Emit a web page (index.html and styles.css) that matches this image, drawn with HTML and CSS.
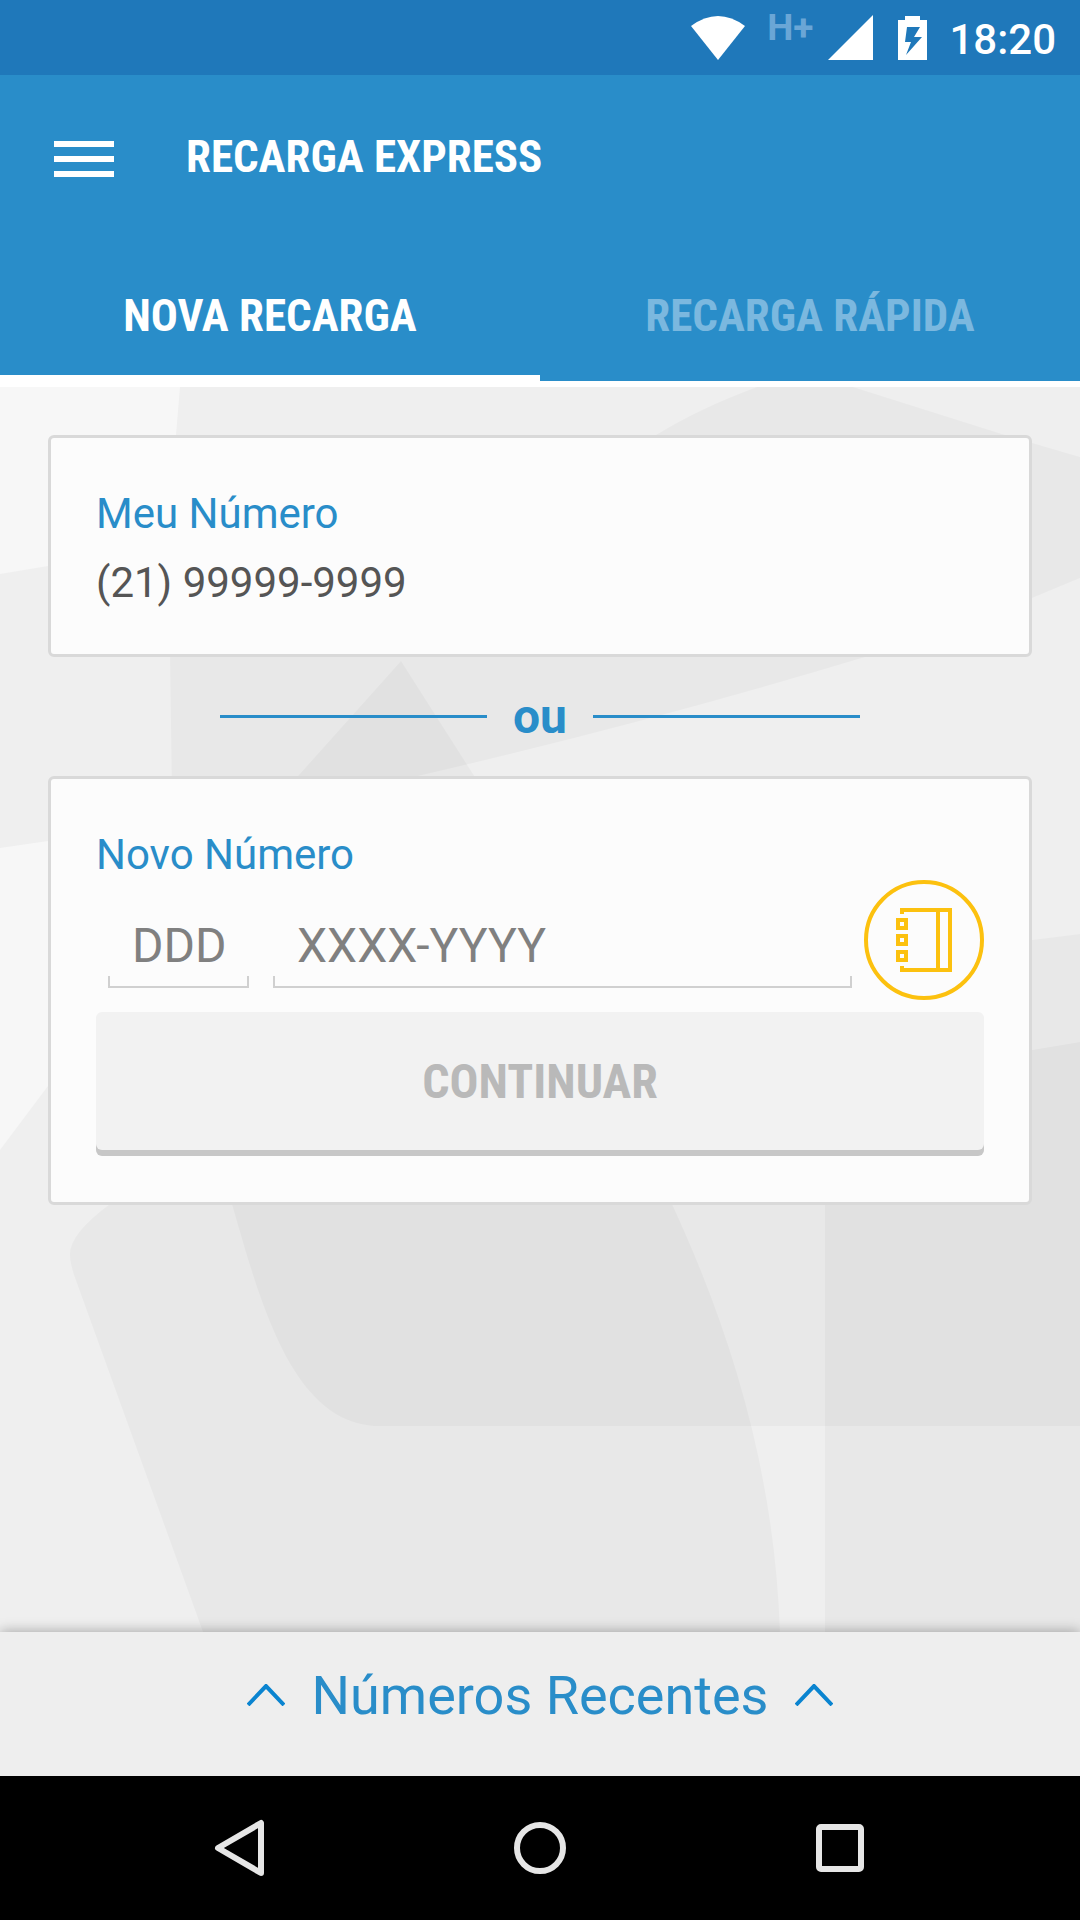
FILE: index.html
```html
<!DOCTYPE html>
<html lang="pt-BR">
<head>
    <meta charset="UTF-8">
    <meta name="viewport" content="width=device-width, initial-scale=1.0">
    <title>Recarga Express</title>
    <link rel="stylesheet" href="styles.css">
</head>
<body>
    <div class="status-bar">
        <svg class="wifi" width="54" height="44" viewBox="0 0 54 44"><path d="M0 10Q27 -10 54 10L27 44Z" fill="#fff"/></svg>
        <span class="network">H+</span>
        <svg class="signal" width="45" height="45" viewBox="0 0 45 45"><path d="M45 0V45H0Z" fill="#fff"/></svg>
        <svg class="battery" width="29" height="44" viewBox="0 0 29 44"><path fill="#fff" fill-rule="evenodd" d="M7 0H22V4H29V44H0V4H7ZM9 11L7 26H13L8 39L24 21H16L22 11Z"/></svg>
        <span class="clock">18:20</span>
    </div>

    <header>
        <div class="app-bar">
            <button class="menu" aria-label="Menu">
                <svg width="60" height="36" viewBox="0 0 60 36"><path d="M0 3H60M0 18H60M0 33H60" stroke="#fff" stroke-width="6"/></svg>
            </button>
            <h1>RECARGA EXPRESS</h1>
        </div>
        <nav class="tabs">
            <a class="tab active" href="#nova">NOVA RECARGA</a>
            <a class="tab" href="#rapida">RECARGA RÁPIDA</a>
        </nav>
    </header>

    <main>
        <svg class="backdrop" viewBox="0 387 1080 1245" preserveAspectRatio="none" aria-hidden="true">
            <g fill="#f7f7f7">
                <path d="M0 387H180L176 435L160 540L48 566L0 574Z"/>
                <path d="M0 848L48 841L200 820V890L48 1086L0 1150Z"/>
            </g>
            <g fill="#000" fill-opacity=".027">
                <path d="M165 540L170 656L172 800H320L418 776Q650 722 865 657L1032 598L1080 578V457L1005 435L853 387Q800 375 757 387Q700 408 656 435L400 600Z"/>
                <path d="M401 661L290 785H480Z"/>
                <path d="M900 960L1032 940L1080 934V1632H825V1000Z"/>
                <path d="M110 1204Q68 1235 70 1256Q70 1262 74 1275L203 1632H780C775 1480 735 1340 672 1204L600 1040H300Z"/>
                <path d="M232 1204C262 1310 295 1426 380 1426H1080V1042L1032 1050L600 1120H200Z"/>
            </g>
        </svg>

        <section class="card">
            <h2>Meu Número</h2>
            <p class="phone">(21) 99999-9999</p>
        </section>

        <div class="divider">ou</div>

        <form class="card">
            <label for="numero">Novo Número</label>
            <div class="fields">
                <input class="ddd" type="tel" placeholder="DDD" aria-label="DDD">
                <input class="numero" id="numero" type="tel" placeholder="XXXX-YYYY">
                <button class="contacts" type="button" aria-label="Contatos">
                    <svg width="120" height="120" viewBox="0 0 120 120" fill="none" stroke="#fcc10f" stroke-width="4">
                        <circle cx="60" cy="60" r="58"/>
                        <path d="M38 34V30H86V90H38V86M74 30V90M34 40H42V48H34ZM34 56H42V64H34ZM34 72H42V80H34Z"/>
                    </svg>
                </button>
            </div>
            <button class="continuar" type="submit" disabled>CONTINUAR</button>
        </form>
    </main>

    <button class="recentes">
        <svg width="38" height="22" viewBox="0 0 38 22"><path d="M1 21L19 2L37 21" fill="none" stroke="#0a84d0" stroke-width="4"/></svg>
        Números Recentes
        <svg width="38" height="22" viewBox="0 0 38 22"><path d="M1 21L19 2L37 21" fill="none" stroke="#0a84d0" stroke-width="4"/></svg>
    </button>

    <div class="nav-bar">
        <button aria-label="Voltar">
            <svg width="60" height="60" viewBox="0 0 60 60"><path d="M51 5V55L8 30Z"/></svg>
        </button>
        <button aria-label="Início">
            <svg width="60" height="60" viewBox="0 0 60 60"><circle cx="30" cy="30" r="23"/></svg>
        </button>
        <button aria-label="Aplicativos">
            <svg width="60" height="60" viewBox="0 0 60 60"><rect x="9" y="9" width="42" height="42" rx="2"/></svg>
        </button>
    </div>
</body>
</html>
```
FILE: styles.css
```css
* {
    box-sizing: border-box;
}
body {
    margin: 0;
    min-height: 100vh;
    display: flex;
    flex-direction: column;
    font-family: Roboto, sans-serif;
    background-color: #efefef;
}
h1, h2, p {
    margin: 0;
}
button {
    padding: 0;
    border: none;
    background: none;
    font-family: inherit;
}
svg {
    display: block;
}

/* status bar */
.status-bar {
    height: 75px;
    padding: 0 24px;
    display: flex;
    justify-content: flex-end;
    align-items: center;
    background-color: #1f78ba;
    color: #fff;
}
.network {
    margin: 0 15px 20px 22px;
    font-size: 37px;
    font-weight: 700;
    line-height: 42px;
    color: #6aa6d6;
}
.battery {
    margin: 0 22px 0 25px;
}
.clock {
    padding-top: 4px;
    font-size: 42px;
    font-weight: 500;
}

/* header */
header {
    background-color: #298dc9;
    border-bottom: 6px solid #fff;
}
.app-bar {
    height: 168px;
    padding: 0 54px;
    display: flex;
    align-items: center;
    gap: 72px;
}
h1, .tab, .continuar {
    font-family: "Roboto Condensed", "Liberation Sans Narrow", Roboto, sans-serif;
    font-weight: 700;
}
h1 {
    padding-bottom: 6px;
    font-size: 45px;
    color: #fff;
}
.tabs {
    display: flex;
}
.tab {
    flex: 1;
    height: 138px;
    padding-top: 6px;
    display: flex;
    align-items: center;
    justify-content: center;
    font-size: 45px;
    color: #7bb8df;
    text-decoration: none;
}
.tab.active {
    color: #fff;
    box-shadow: inset 0 -6px #fff;
}

/* content */
main {
    flex: 1;
    position: relative;
    padding: 48px;
}
.backdrop {
    position: absolute;
    top: 0;
    left: 0;
    width: 100%;
    height: 100%;
}
.card {
    position: relative;
    display: flex;
    flex-direction: column;
    padding: 52px 45px 46px;
    border: 3px solid #d9d9d9;
    border-radius: 6px;
    background-color: #fcfcfc;
}
h2, label {
    font-size: 42px;
    font-weight: 400;
    line-height: 48px;
    color: #298dc9;
}
.phone {
    margin-top: 20px;
    font-size: 42px;
    line-height: 50px;
    color: #555;
}
.divider {
    position: relative;
    height: 119px;
    display: flex;
    align-items: center;
    justify-content: center;
    gap: 26px;
    font-size: 48px;
    font-weight: 700;
    color: #298dc9;
}
.divider::before, .divider::after {
    content: "";
    width: 267px;
    height: 3px;
    background-color: #298dc9;
}
.fields {
    margin: 1px 0 12px;
    display: flex;
    align-items: flex-end;
}
input {
    height: 84px;
    margin: 0 12px 12px;
    padding: 0 24px;
    border: none;
    border-bottom: 2px solid #d0d0d0;
    background:
        linear-gradient(#d0d0d0, #d0d0d0) left bottom / 2px 10px no-repeat,
        linear-gradient(#d0d0d0, #d0d0d0) right bottom / 2px 10px no-repeat;
    font-family: inherit;
    font-size: 48px;
    color: #555;
}
input::placeholder {
    color: #808080;
}
.ddd {
    width: 141px;
}
.numero {
    flex: 1;
    min-width: 0;
}
.continuar {
    height: 138px;
    margin-bottom: 6px;
    border-radius: 6px;
    background-color: #f2f2f2;
    box-shadow: 0 6px #c7c7c7;
    font-size: 48px;
    color: #b9b9b9;
}

/* bottom */
.recentes {
    position: relative;
    height: 144px;
    padding-bottom: 18px;
    display: flex;
    align-items: center;
    justify-content: center;
    gap: 27px;
    background-color: #eee;
    box-shadow: 0 -1px 12px rgba(0, 0, 0, 0.3);
    font-size: 54px;
    color: #298dc9;
}
.nav-bar {
    position: relative;
    height: 144px;
    padding: 0 90px;
    display: flex;
    background-color: #000;
}
.nav-bar button {
    flex: 1;
    display: flex;
    align-items: center;
    justify-content: center;
}
.nav-bar svg {
    fill: none;
    stroke: #e6e6e6;
    stroke-width: 6;
    stroke-linejoin: round;
}
```
